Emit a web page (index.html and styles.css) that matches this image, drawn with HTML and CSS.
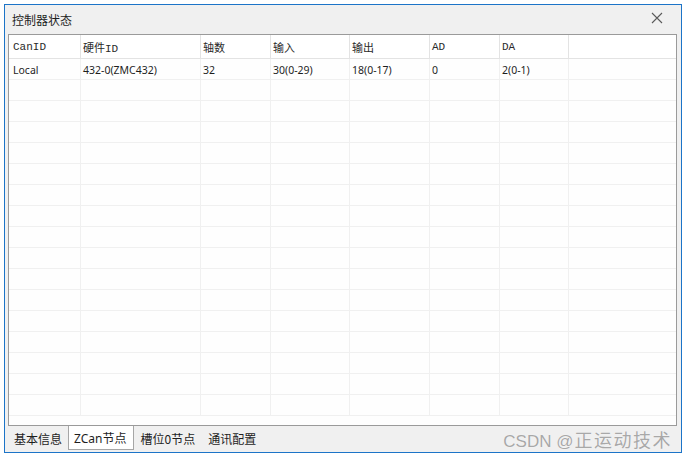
FILE: index.html
```html
<!DOCTYPE html>
<html>
<head>
<meta charset="utf-8">
<link rel="stylesheet" href="styles.css">
</head>
<body>
<div class="window">
  <div class="titlebar">
    <span class="title">控制器状态</span>
    <svg class="close" width="12" height="12" viewBox="0 0 12 12"><path d="M1 1L11 11M11 1L1 11" stroke="#5a5a5a" stroke-width="1.1" fill="none"/></svg>
  </div>
  <div class="grid">
    <div class="row head">
      <div class="c first">CanID</div><div class="c">硬件ID</div><div class="c">轴数</div><div class="c">输入</div><div class="c">输出</div><div class="c">AD</div><div class="c">DA</div><div class="c last"></div>
    </div>
    <div class="row data">
      <div class="c first">Local</div><div class="c">432-0(ZMC432)</div><div class="c">32</div><div class="c">30(0-29)</div><div class="c">18(0-17)</div><div class="c">0</div><div class="c">2(0-1)</div><div class="c last"></div>
    </div>
    <div class="row"><div class="c"></div><div class="c"></div><div class="c"></div><div class="c"></div><div class="c"></div><div class="c"></div><div class="c"></div><div class="c last"></div></div>
    <div class="row"><div class="c"></div><div class="c"></div><div class="c"></div><div class="c"></div><div class="c"></div><div class="c"></div><div class="c"></div><div class="c last"></div></div>
    <div class="row"><div class="c"></div><div class="c"></div><div class="c"></div><div class="c"></div><div class="c"></div><div class="c"></div><div class="c"></div><div class="c last"></div></div>
    <div class="row"><div class="c"></div><div class="c"></div><div class="c"></div><div class="c"></div><div class="c"></div><div class="c"></div><div class="c"></div><div class="c last"></div></div>
    <div class="row"><div class="c"></div><div class="c"></div><div class="c"></div><div class="c"></div><div class="c"></div><div class="c"></div><div class="c"></div><div class="c last"></div></div>
    <div class="row"><div class="c"></div><div class="c"></div><div class="c"></div><div class="c"></div><div class="c"></div><div class="c"></div><div class="c"></div><div class="c last"></div></div>
    <div class="row"><div class="c"></div><div class="c"></div><div class="c"></div><div class="c"></div><div class="c"></div><div class="c"></div><div class="c"></div><div class="c last"></div></div>
    <div class="row"><div class="c"></div><div class="c"></div><div class="c"></div><div class="c"></div><div class="c"></div><div class="c"></div><div class="c"></div><div class="c last"></div></div>
    <div class="row"><div class="c"></div><div class="c"></div><div class="c"></div><div class="c"></div><div class="c"></div><div class="c"></div><div class="c"></div><div class="c last"></div></div>
    <div class="row"><div class="c"></div><div class="c"></div><div class="c"></div><div class="c"></div><div class="c"></div><div class="c"></div><div class="c"></div><div class="c last"></div></div>
    <div class="row"><div class="c"></div><div class="c"></div><div class="c"></div><div class="c"></div><div class="c"></div><div class="c"></div><div class="c"></div><div class="c last"></div></div>
    <div class="row"><div class="c"></div><div class="c"></div><div class="c"></div><div class="c"></div><div class="c"></div><div class="c"></div><div class="c"></div><div class="c last"></div></div>
    <div class="row"><div class="c"></div><div class="c"></div><div class="c"></div><div class="c"></div><div class="c"></div><div class="c"></div><div class="c"></div><div class="c last"></div></div>
    <div class="row"><div class="c"></div><div class="c"></div><div class="c"></div><div class="c"></div><div class="c"></div><div class="c"></div><div class="c"></div><div class="c last"></div></div>
    <div class="row"><div class="c"></div><div class="c"></div><div class="c"></div><div class="c"></div><div class="c"></div><div class="c"></div><div class="c"></div><div class="c last"></div></div>
    <div class="row"><div class="c"></div><div class="c"></div><div class="c"></div><div class="c"></div><div class="c"></div><div class="c"></div><div class="c"></div><div class="c last"></div></div>
  </div>
  <div class="tabs">
    <span class="tab">基本信息</span>
    <span class="tab active">ZCan节点</span>
    <span class="tab">槽位0节点</span>
    <span class="tab">通讯配置</span>
  </div>
  <div class="watermark">CSDN @<span class="wm-cjk">正运动技术</span></div>
</div>
</body>
</html>
```

FILE: styles.css
```css
html, body {
  margin: 0;
  padding: 0;
  background: #ffffff;
}
body {
  width: 689px;
  height: 461px;
  overflow: hidden;
  font-family: "Noto Sans", "Noto Sans CJK SC", sans-serif;
  font-size: 12px;
  color: #1e1e1e;
}
.window {
  position: relative;
  margin: 4px 0 0 4px;
  width: 678px;
  height: 449px;
  box-sizing: border-box;
  border: 1px solid #1c74c8;
  background: #f0f0f0;
  display: flex;
  flex-direction: column;
}
.titlebar {
  height: 29px;
  display: flex;
  align-items: center;
  justify-content: space-between;
  padding: 0 18px 0 7px;
  flex: none;
}
.title {
  font-family: "Noto Sans CJK SC", sans-serif;
  font-size: 12px;
  color: #1e1e1e;
}
.close {
  margin-top: -4px;
}
.grid {
  margin: 0 4px 0 3px;
  height: 392px;
  box-sizing: border-box;
  border: 1px solid #9a9a9a;
  background: #fefefe;
  overflow: hidden;
  flex: none;
}
.row {
  display: grid;
  grid-template-columns: 72px 120px 70px 79px 80px 70px 69px 1fr;
  height: 21px;
  box-sizing: border-box;
  border-bottom: 1px solid #f0f0f0;
}
.c {
  box-sizing: border-box;
  border-right: 1px solid #f0f0f0;
  padding-left: 2px;
  white-space: nowrap;
  overflow: hidden;
  display: flex;
  align-items: center;
}
.c.first {
  padding-left: 4px;
}
.c.last {
  border-right: none;
}
.row.head {
  height: 24px;
  background: #ffffff;
  border-bottom: 1px solid #e3e3e3;
}
.row.head .c {
  border-right: 1px solid #e3e3e3;
  font-family: "Liberation Mono", "Noto Sans CJK SC", monospace;
  font-size: 11px;
  color: #2a2a2a;
  padding-top: 1px;
}
.row.head .c.last {
  border-right: none;
}
.row.data .c {
  color: #1e1e1e;
  font-size: 10.5px;
  padding-top: 1px;
}
.tabs {
  display: flex;
  align-items: flex-start;
  padding-left: 4px;
  height: 26px;
  flex: none;
  font-family: "Noto Sans CJK SC", sans-serif;
  font-size: 12px;
}
.tab {
  padding: 4px 8px 0 5px;
  height: 24px;
  box-sizing: border-box;
  color: #1e1e1e;
  line-height: 17px;
}
.tab:first-child {
  padding-right: 4px;
}
.tab.active {
  background: #ffffff;
  border: 1px solid #a6a6a6;
  border-top: none;
  padding: 4px 6px 0 5px;
  margin-left: 2px;
  margin-right: 2px;
  font-family: "Noto Sans", "Noto Sans CJK SC", sans-serif;
}
.watermark {
  position: absolute;
  right: 9px;
  bottom: 0;
  font-family: "Liberation Sans", "Noto Sans CJK SC", sans-serif;
  font-size: 17px;
  color: #a8a8a8;
  text-shadow: 0 0 1px #ffffff;
}
.wm-cjk {
  font-family: "Noto Sans CJK SC", sans-serif;
  font-size: 18px;
  letter-spacing: 1.5px;
  margin-left: 1px;
}
```
